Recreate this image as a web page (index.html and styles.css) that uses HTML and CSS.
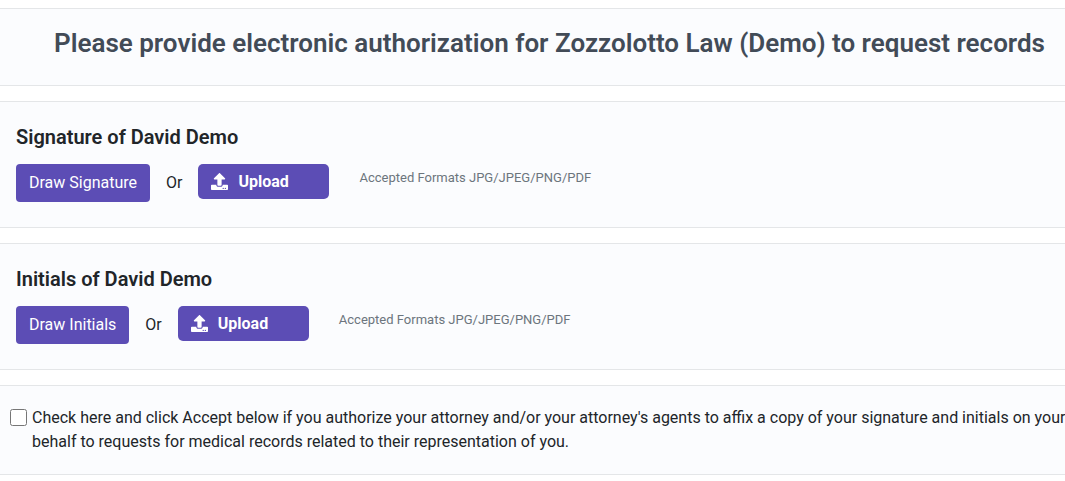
FILE: index.html
```html
<!DOCTYPE html>
<html lang="en">
<head>
	<meta charset="UTF-8">
	<title>Electronic Authorization</title>
	<link rel="stylesheet" href="styles.css">
</head>
<body>
	<header class="panel heading">
		<h1>Please provide electronic authorization for Zozzolotto Law (Demo) to request records</h1>
	</header>

	<section class="panel sign">
		<h2>Signature of David Demo</h2>
		<div class="actions">
			<button type="button" class="btn">Draw Signature</button>
			<span class="or">Or</span>
			<button type="button" class="btn upload">
				<svg class="icon" viewBox="0 0 512 512" aria-hidden="true"><path d="M296 384h-80c-13.300 0-24-10.700-24-24V192h-87.700c-17.800 0-26.700-21.500-14.100-34.100L242.300 5.700c7.500-7.500 19.800-7.500 27.300 0l152.200 152.200c12.600 12.600 3.700 34.100-14.100 34.100H320v168c0 13.300-10.700 24-24 24zm216-8v112c0 13.300-10.700 24-24 24H24c-13.300 0-24-10.700-24-24V376c0-13.300 10.700-24 24-24h136v8c0 30.900 25.100 56 56 56h80c30.900 0 56-25.100 56-56v-8h136c13.300 0 24 10.700 24 24zm-124 88c0-11-9-20-20-20s-20 9-20 20 9 20 20 20 20-9 20-20zm64 0c0-11-9-20-20-20s-20 9-20 20 9 20 20 20 20-9 20-20z"/></svg>
				Upload
			</button>
			<span class="formats">Accepted Formats JPG/JPEG/PNG/PDF</span>
		</div>
	</section>

	<section class="panel sign">
		<h2>Initials of David Demo</h2>
		<div class="actions">
			<button type="button" class="btn">Draw Initials</button>
			<span class="or">Or</span>
			<button type="button" class="btn upload">
				<svg class="icon" viewBox="0 0 512 512" aria-hidden="true"><path d="M296 384h-80c-13.300 0-24-10.700-24-24V192h-87.700c-17.800 0-26.700-21.500-14.100-34.100L242.300 5.700c7.500-7.500 19.800-7.500 27.300 0l152.200 152.200c12.600 12.600 3.700 34.100-14.100 34.100H320v168c0 13.300-10.700 24-24 24zm216-8v112c0 13.300-10.700 24-24 24H24c-13.300 0-24-10.700-24-24V376c0-13.300 10.700-24 24-24h136v8c0 30.900 25.100 56 56 56h80c30.900 0 56-25.100 56-56v-8h136c13.300 0 24 10.700 24 24zm-124 88c0-11-9-20-20-20s-20 9-20 20 9 20 20 20 20-9 20-20zm64 0c0-11-9-20-20-20s-20 9-20 20 9 20 20 20 20-9 20-20z"/></svg>
				Upload
			</button>
			<span class="formats">Accepted Formats JPG/JPEG/PNG/PDF</span>
		</div>
	</section>

	<section class="panel agree">
		<input type="checkbox" id="accept">
		<label for="accept">Check here and click Accept below if you authorize your attorney and/or your attorney's agents to affix a copy of your signature and initials on your behalf to requests for medical records related to their representation of you.</label>
	</section>
</body>
</html>
```
FILE: styles.css
```css
*{
	box-sizing: border-box;
}
body{
	margin: 0;
	padding-top: 8px;
	display: flex;
	flex-direction: column;
	gap: 15px;
	overflow-x: hidden;
	background-color: #fff;
	color: #212529;
	font-family: Roboto, sans-serif;
	font-size: 16px;
	line-height: 24px;
}
h1,h2{
	margin: 0;
}
.panel{
	background-color: #fbfcfe;
	border: solid #e4e6e8;
	border-width: 1px 0;
}
.heading{
	padding: 18px 16px 26px 50px;
	text-align: center;
}
.heading h1{
	color: #424b57;
	font-size: 26px;
	font-weight: 600;
	line-height: 32px;
}
.sign{
	padding: 23px 16px 25px;
}
.sign h2{
	margin-bottom: 15px;
	font-size: 20px;
	font-weight: 600;
	line-height: 24px;
}
.actions{
	display: flex;
	align-items: flex-start;
}
.btn{
	height: 38px;
	padding: 0 13px 2px;
	border: 0;
	border-radius: 4px;
	background-color: #5c4db5;
	color: #fff;
	font-family: inherit;
	font-size: 16px;
	cursor: pointer;
}
.or{
	margin: 7px 16px 0;
}
.upload{
	display: flex;
	align-items: center;
	gap: 10px;
	width: 131px;
	height: 35px;
	padding-bottom: 0;
	border-radius: 5px;
	font-weight: 700;
}
.icon{
	width: 17px;
	height: 17px;
	fill: currentColor;
}
.formats{
	margin: 4px 0 0 30px;
	color: #6c757d;
	font-size: 13px;
	line-height: 20px;
}
.agree{
	display: flex;
	align-items: flex-start;
	gap: 5px;
	padding: 20px 0 20px 10px;
}
.agree input{
	flex: none;
	width: 17px;
	height: 17px;
	margin: 3px 0 0;
}
/* text runs right up to the edge of the panel */
.agree label{
	flex: 1;
	margin-right: -8px;
}
```
